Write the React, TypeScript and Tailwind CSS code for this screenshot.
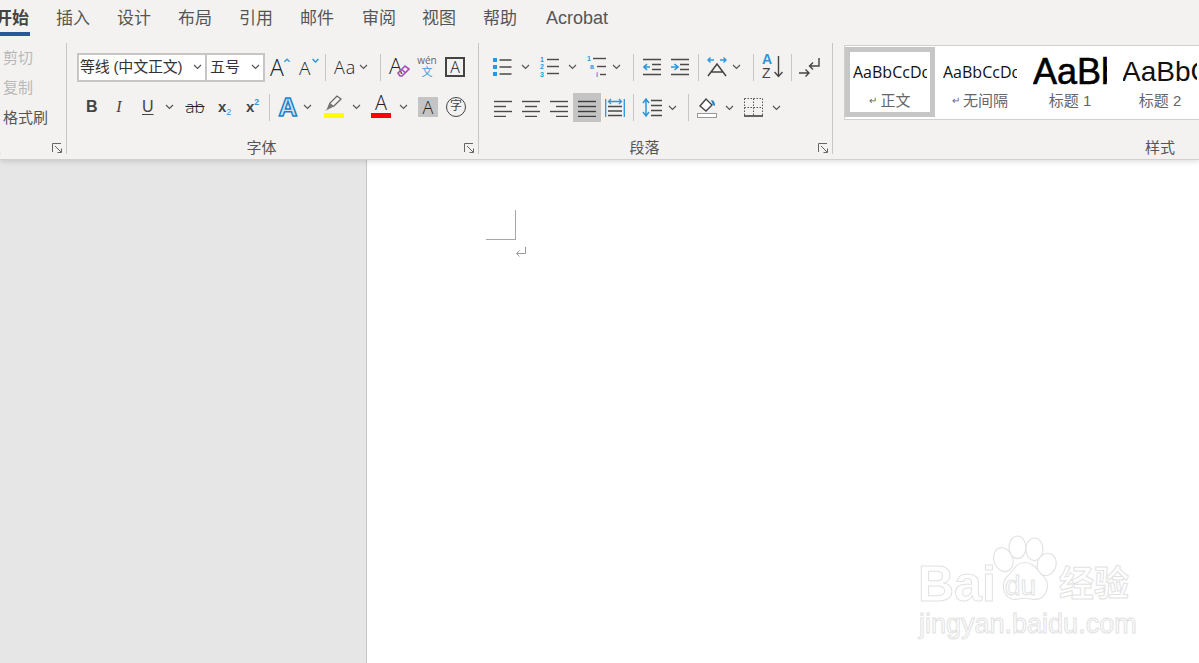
import React from "react";

const CJK = "font-['Liberation_Sans','Noto_Sans_CJK_SC',sans-serif]";
const BLUE = "#2f96d9";
const DARK = "#4a4a4a";
const THIN = "font-['Open_Sans',sans-serif] font-light text-[#222]";
const PREVIEW = "text-[16px] text-[#111] font-['Open_Sans',sans-serif] font-normal";

function Chev({ c = "" }: { c?: string }) {
  return (
    <svg className={`shrink-0 ${c}`} width="9" height="6" viewBox="0 0 9 6" fill="none" stroke="#555" strokeWidth="1.2">
      <path d="M1 1l3.5 3.5L8 1" />
    </svg>
  );
}

function Sep({ c = "" }: { c?: string }) {
  return <span className={`block w-px h-[27px] bg-[#c8c6c4] shrink-0 ${c}`} />;
}

function Launcher() {
  return (
    <svg className="absolute bottom-0 right-[3px]" width="11" height="11" viewBox="0 0 11 11" fill="none" stroke="#666" strokeWidth="1">
      <path d="M.5 9V.5H9" />
      <path d="M3 3l6 6M5.5 9.5h4v-4" />
    </svg>
  );
}

function Lines({ c = "", rows, w = 18, h = 18, color = DARK }: { c?: string; rows: [number, number, number][]; w?: number; h?: number; color?: string }) {
  return (
    <svg className={`shrink-0 ${c}`} width={w} height={h} viewBox={`0 0 ${w} ${h}`} fill="none" stroke={color} strokeWidth="1.4">
      {rows.map(([a, b, y], i) => (
        <path key={i} d={`M${a} ${y + 0.5}H${b}`} />
      ))}
    </svg>
  );
}

function Tab({ children, c = "w-[61px] text-[17px]" }: { children: React.ReactNode; c?: string }) {
  return <span className={`shrink-0 leading-[37px] text-[#555] ${c}`}>{children}</span>;
}

function StyleItem({ selected, preview, label, mark }: { selected?: boolean; preview: React.ReactNode; label: string; mark?: boolean }) {
  return (
    <div className={`w-[90px] h-[70px] shrink-0 flex flex-col items-center ${selected ? "border-[5px] border-[#c6c6c6]" : "border-[5px] border-transparent"}`}>
      <div className="w-[74px] h-[39px] overflow-hidden whitespace-nowrap flex items-center">{preview}</div>
      <div className="flex items-center text-[15px] leading-[20px] text-[#666]">
        {mark && <span className="text-[10px] mr-[3px]">↵</span>}
        {label}
      </div>
    </div>
  );
}

export default function App() {
  return (
    <div className={`w-[1199px] h-[663px] overflow-hidden flex flex-col bg-white relative ${CJK}`}>
      {/* Tabs */}
      <div className="h-[37px] bg-[#f3f2f1] flex shrink-0 relative z-20">
        <div className="w-[30px] shrink-0 mr-[26px] h-[36px] border-b-[4px] border-[#2b579a] overflow-hidden">
          <span className="block -ml-[5px] text-[17px] leading-[37px] font-bold text-[#444] whitespace-nowrap">开始</span>
        </div>
        <Tab>插入</Tab>
        <Tab>设计</Tab>
        <Tab>布局</Tab>
        <Tab>引用</Tab>
        <Tab c="w-[62px] text-[17px]">邮件</Tab>
        <Tab c="w-[60px] text-[17px]">审阅</Tab>
        <Tab>视图</Tab>
        <Tab c="w-[63px] text-[17px]">帮助</Tab>
        <Tab c="w-[70px] text-[18px]">Acrobat</Tab>
      </div>

      {/* Ribbon */}
      <div className="h-[123px] bg-[#f3f2f1] flex shrink-0 border-b border-[#d2d0ce] shadow-[0_2px_5px_rgba(0,0,0,0.12)] relative z-10 text-[#444]">
        {/* Clipboard */}
        <div className="w-[67px] mt-[6px] h-[111px] border-r border-[#c8c6c4] relative shrink-0 flex flex-col pl-[3px] text-[15px] overflow-hidden">
          <span className="leading-[30px] text-[#b8b8b8]">剪切</span>
          <span className="leading-[30px] text-[#b8b8b8]">复制</span>
          <span className="leading-[30px] text-[#555]">格式刷</span>
          <span className="absolute bottom-[-3px] left-[-44px] text-[15px] leading-[18px] text-[#555]">剪贴板</span>
          <Launcher />
        </div>

        {/* Font */}
        <div className="w-[412px] mt-[6px] h-[111px] border-r border-[#c8c6c4] relative shrink-0 flex flex-col pl-[10px] pt-[10px]">
          <div className="flex items-center h-[28px]">
            <div className="w-[130px] h-[29px] bg-white border-2 border-[#c8c6c4] flex items-center shrink-0 pl-[1px] text-[15px] text-[#333]">
              <span className="whitespace-nowrap tracking-[-0.2px]">等线 (中文正文)</span>
              <Chev c="ml-auto mr-[3px]" />
            </div>
            <div className="w-[58px] h-[29px] bg-white border-2 border-l-0 border-[#c8c6c4] flex items-center shrink-0 pl-[3px] text-[15px] text-[#333]">
              <span>五号</span>
              <Chev c="ml-auto mr-[3px]" />
            </div>
            <div className="ml-[5px] w-[20px] flex items-start shrink-0">
              <span className={`text-[23px] leading-[24px] w-[14px] ${THIN}`}>A</span>
              <svg className="mt-[3px]" width="7" height="5" viewBox="0 0 7 5" fill="none" stroke={BLUE} strokeWidth="1.5"><path d="M.5 4l3-3 3 3" /></svg>
            </div>
            <div className="ml-[9px] w-[20px] flex items-start shrink-0">
              <span className={`text-[19px] leading-[24px] w-[13px] mt-[1px] ${THIN}`}>A</span>
              <svg className="mt-[3px]" width="7" height="5" viewBox="0 0 7 5" fill="none" stroke={BLUE} strokeWidth="1.5"><path d="M.5 1l3 3 3-3" /></svg>
            </div>
            <Sep c="ml-[6px]" />
            <span className={`ml-[8px] w-[22px] text-[18px] tracking-[1px] shrink-0 whitespace-nowrap ${THIN}`}>Aa</span>
            <Chev c="ml-[3px]" />
            <Sep c="ml-[12px]" />
            <div className="ml-[8px] w-[21px] h-[22px] relative shrink-0">
              <span className={`absolute left-0 top-[-3px] text-[22px] leading-[24px] ${THIN}`}>A</span>
              <svg className="absolute left-[8px] top-[8px]" width="13" height="14" viewBox="0 0 13 14" fill="none" stroke="#a94cb8" strokeWidth="1.6">
                <path d="M1 9l7-7 4 3-7 7H3z" />
                <path d="M5 5.500l3.500 3.500" />
              </svg>
            </div>
            <div className="ml-[8px] w-[18px] h-[24px] flex flex-col items-center shrink-0 relative">
              <span className="text-[10px] leading-[11px] text-[#666] font-['Open_Sans',sans-serif]">wén</span>
              <span className="text-[11px] leading-[12px] text-[#3a9ad9]">文</span>
            </div>
            <div className={`ml-[9px] w-[20px] h-[20px] border-2 border-[#444] flex items-center justify-center text-[16px] leading-[16px] shrink-0 ${THIN}`}>A</div>
          </div>

          <div className="flex items-center h-[28px] mt-[12px]">
            <span className="ml-[9px] w-[10px] text-[16px] font-bold text-center shrink-0">B</span>
            <span className="ml-[18px] w-[10px] text-[16px] italic font-['Liberation_Serif',serif] text-center shrink-0">I</span>
            <span className="ml-[18px] w-[10px] text-[16px] underline underline-offset-2 text-center shrink-0">U</span>
            <Chev c="ml-[13px]" />
            <span className={`ml-[11px] w-[20px] text-[17px] line-through text-center shrink-0 ${THIN}`}>ab</span>
            <span className="ml-[13px] w-[15px] flex items-baseline shrink-0 font-bold text-[15px]">x<span className="text-[9px] font-normal text-[#3a96dd] translate-y-[3px]">2</span></span>
            <span className="ml-[13px] w-[15px] flex items-start shrink-0 font-bold text-[15px] leading-[20px]">x<span className="text-[9px] leading-[10px] text-[#3a96dd]">2</span></span>
            <Sep c="ml-[8px]" />
            <span className="ml-[8px] w-[20px] text-[26px] leading-[28px] font-bold text-center text-[#cfe6f7] [-webkit-text-stroke:1.5px_#1e7fc8] shrink-0">A</span>
            <Chev c="ml-[5px]" />
            <div className="ml-[12px] w-[20px] h-[25px] mb-[3px] flex flex-col items-center justify-end shrink-0">
              <svg width="20" height="17" viewBox="0 0 20 17" fill="none">
                <path d="M4 13l2-5 7-7 4 3-7 7z" stroke="#666" strokeWidth="1.3" />
                <path d="M1 16l3-3 2-5 4 3-5 3z" fill="#777" />
              </svg>
              <span className="w-[20px] h-[5px] bg-[#ffff00] mt-[1px]" />
            </div>
            <Chev c="ml-[8px]" />
            <div className="ml-[10px] w-[20px] h-[25px] mb-[3px] flex flex-col items-center justify-end shrink-0">
              <span className={`text-[20px] leading-[19px] ${THIN}`}>A</span>
              <span className="w-[20px] h-[5px] bg-[#ff0000] mt-[1px]" />
            </div>
            <Chev c="ml-[8px]" />
            <span className={`ml-[10px] w-[20px] h-[20px] bg-[#c4c4c4] text-[18px] leading-[20px] text-center shrink-0 ${THIN}`}>A</span>
            <span className="ml-[8px] w-[20px] h-[20px] rounded-full border-[1.5px] border-[#444] text-[12px] leading-[17px] text-center shrink-0">字</span>
          </div>

          <div className="absolute left-0 right-[22px] bottom-[-3px] h-[18px] text-center text-[15px] leading-[18px] text-[#555]">字体</div>
          <Launcher />
        </div>

        {/* Paragraph */}
        <div className="w-[354px] mt-[6px] h-[111px] border-r border-[#c8c6c4] relative shrink-0 flex flex-col pt-[10px]">
          <div className="flex items-center h-[28px]">
            <svg className="ml-[14px] shrink-0" width="19" height="20" viewBox="0 0 19 20">
              <path d="M0 2h4v4H0zM0 9h4v4H0zM0 16h4v4H0z" fill={BLUE} transform="translate(0,-1)" />
              <path d="M6.500 3h12M6.500 10h12M6.500 17h12" stroke={DARK} strokeWidth="1.4" />
            </svg>
            <Chev c="ml-[9px]" />
            <div className="ml-[10px] w-[19px] h-[22px] flex shrink-0">
              <div className="w-[6px] flex flex-col text-[7px] leading-[7.4px] font-bold text-[#2f96d9]"><span>1</span><span>2</span><span>3</span></div>
              <Lines w={13} h={22} rows={[[1, 13, 3], [1, 13, 10], [1, 13, 17]]} />
            </div>
            <Chev c="ml-[9px]" />
            <div className="ml-[10px] w-[19px] h-[22px] relative shrink-0">
              <span className="absolute left-0 top-[-1px] text-[7px] leading-[8px] font-bold text-[#2f96d9]">1</span>
              <span className="absolute left-[3px] top-[7px] text-[7px] leading-[8px] font-bold text-[#2f96d9]">a</span>
              <span className="absolute left-[9px] top-[15px] text-[7px] leading-[8px] font-bold text-[#2f96d9]">i</span>
              <Lines c="absolute left-0 top-0" w={19} h={22} rows={[[6, 19, 2], [10, 19, 10], [13, 19, 18]]} />
            </div>
            <Chev c="ml-[6px]" />
            <Sep c="ml-[12px]" />
            <svg className="ml-[9px] shrink-0" width="18" height="18" viewBox="0 0 18 18" fill="none" stroke={DARK} strokeWidth="1.4">
              <path d="M0 1.500h18M9 6.500h9M9 11.500h9M0 16.500h18" />
              <path d="M7 9H1M4 6L1 9l3 3" stroke={BLUE} strokeWidth="1.6" />
            </svg>
            <svg className="ml-[10px] shrink-0" width="18" height="18" viewBox="0 0 18 18" fill="none" stroke={DARK} strokeWidth="1.4">
              <path d="M0 1.500h18M9 6.500h9M9 11.500h9M0 16.500h18" />
              <path d="M0 9h6M3.500 6L7 9l-3.500 3" stroke={BLUE} strokeWidth="1.6" />
            </svg>
            <Sep c="ml-[9px]" />
            <svg className="ml-[8px] shrink-0" width="20" height="20" viewBox="0 0 20 20" fill="none">
              <path d="M1 19L10 7l9 12M4 15h12" stroke="#444" strokeWidth="1.5" />
              <path d="M1 3h6M3.500 .5L1 3l2.500 2.500M19 3h-6M16.500 .5L19 3l-2.500 2.500" stroke={BLUE} strokeWidth="1.4" />
            </svg>
            <Chev c="ml-[5px]" />
            <Sep c="ml-[12px]" />
            <div className="ml-[8px] w-[21px] h-[22px] relative shrink-0 font-bold">
              <span className="absolute left-0 top-[-4px] text-[14px] leading-[15px] text-[#2f96d9]">A</span>
              <span className="absolute left-0 top-[10px] text-[14px] leading-[14px] font-normal text-[#444]">Z</span>
              <svg className="absolute left-[12px] top-0" width="9" height="22" viewBox="0 0 9 22" fill="none" stroke="#444" strokeWidth="1.4"><path d="M4.500 0v20M.5 16l4 4.500 4-4.500" /></svg>
            </div>
            <Sep c="ml-[8px]" />
            <svg className="ml-[7px] shrink-0" width="21" height="20" viewBox="0 0 21 20" fill="none" stroke="#444" strokeWidth="1.4">
              <path d="M20 1v8h-9M14 5.500L10.500 9l3.500 3.500" />
              <path d="M0 16h10M6.500 12.500L10 16l-3.500 3.500" />
            </svg>
          </div>

          <div className="flex items-center h-[29px] mt-[12px]">
            <Lines c="ml-[15px]" rows={[[0, 18, 2], [0, 12, 7], [0, 18, 12], [0, 12, 17]]} />
            <Lines c="ml-[10px]" rows={[[0, 18, 2], [3, 15, 7], [0, 18, 12], [3, 15, 17]]} />
            <Lines c="ml-[10px]" rows={[[0, 18, 2], [6, 18, 7], [0, 18, 12], [6, 18, 17]]} />
            <div className="ml-[5px] w-[28px] h-[29px] bg-[#c4c4c4] flex items-center justify-center shrink-0">
              <Lines rows={[[0, 18, 2], [0, 18, 7], [0, 18, 12], [0, 18, 17]]} color="#3d3d3d" />
            </div>
            <svg className="ml-[4px] shrink-0" width="20" height="20" viewBox="0 0 20 20" fill="none">
              <path d="M.7 1v18M19.300 1v18" stroke={BLUE} strokeWidth="1.3" />
              <path d="M4 3.500h12M6 1L3.500 3.500 6 6M14 1l2.500 2.500L14 6" stroke={BLUE} strokeWidth="1.3" />
              <path d="M3 8.500h14M3 13h14M3 17.500h14" stroke={DARK} strokeWidth="1.4" />
            </svg>
            <Sep c="ml-[8px]" />
            <svg className="ml-[8px] shrink-0" width="20" height="19" viewBox="0 0 20 19" fill="none">
              <path d="M4 1v17M1 5l3-4 3 4M1 14l3 4 3-4" stroke={BLUE} strokeWidth="1.5" />
              <path d="M9 2.500h11M9 7.500h11M9 12.500h11M9 17.500h11" stroke={DARK} strokeWidth="1.4" />
            </svg>
            <Chev c="ml-[6px]" />
            <Sep c="ml-[11px]" />
            <svg className="ml-[8px] shrink-0" width="20" height="21" viewBox="0 0 20 21" fill="none">
              <path d="M3 9l6-7 6 6-6 6z" stroke="#444" strokeWidth="1.4" fill="#fff" />
              <path d="M14 3c3 0 4 3 4 6l-2-1z" fill="#1e7fc8" />
              <rect x=".5" y="16.500" width="19" height="4" stroke="#999" fill="#fff" />
            </svg>
            <Chev c="ml-[8px]" />
            <svg className="ml-[10px] shrink-0" width="19" height="19" viewBox="0 0 19 19" fill="none" stroke="#555" strokeWidth="1">
              <path d="M.5 .5h18M.5 9.500h18M.5 .5v18M9.500 .5v18M18.500 .5v18" strokeDasharray="1.500 1.500" />
              <path d="M0 18h19" strokeWidth="1.500" stroke="#333" />
            </svg>
            <Chev c="ml-[9px]" />
          </div>

          <div className="absolute left-0 right-[22px] bottom-[-3px] h-[18px] text-center text-[15px] leading-[18px] text-[#555]">段落</div>
          <Launcher />
        </div>

        {/* Styles */}
        <div className="flex-1 relative mt-[8px] pl-[11px] overflow-hidden">
          <div className="h-[75px] bg-white border border-r-0 border-[#d2d0ce] flex items-start pt-[1px]">
            <StyleItem selected mark label="正文" preview={<span className={PREVIEW}>AaBbCcDd</span>} />
            <StyleItem mark label="无间隔" preview={<span className={PREVIEW}>AaBbCcDd</span>} />
            <StyleItem label="标题 1" preview={<span className="text-[36px] text-black font-['Liberation_Sans',sans-serif] [-webkit-text-stroke:0.6px_#000]">AaBbC</span>} />
            <StyleItem label="标题 2" preview={<span className="text-[28px] text-[#111] font-['Liberation_Sans',sans-serif] ml-[-1px]">AaBbC</span>} />
          </div>
          <div className="absolute left-[312px] bottom-[2px] text-[15px] leading-[18px] text-[#555]">样式</div>
        </div>
      </div>

      {/* Document body */}
      <div className="flex-1 flex min-h-0">
        <div className="w-[367px] shrink-0 bg-[#e6e6e6] border-r border-[#c8c6c4]" />
        <div className="flex-1 bg-white pl-[119px] pt-[50px] flex flex-col items-start">
          <div className="w-[30px] h-[30px] border-r border-b border-[#a6a6a6]" />
          <svg className="ml-[29px] mt-[7px]" width="11" height="10" viewBox="0 0 11 10" fill="none" stroke="#999" strokeWidth="1">
            <path d="M10.500 0v6.500H1.500M4.500 3.500L1.500 6.500l3 3" />
          </svg>
        </div>
      </div>

      {/* Watermark */}
      <div className="absolute left-[918px] top-[533px] w-[220px] h-[106px] text-white pointer-events-none">
        <span className="absolute left-[0px] top-[26px] text-[50px] leading-[50px] font-bold [-webkit-text-stroke:1px_#e2e2e2] font-['Liberation_Sans',sans-serif]">Bai</span>
        <svg className="absolute left-[74px] top-[2px]" width="66" height="70" viewBox="0 0 70 72" fill="#fff" stroke="#e2e2e2" strokeWidth="1.2">
          <ellipse cx="12" cy="25" rx="10" ry="13" transform="rotate(-20 12 25)" />
          <ellipse cx="27" cy="12" rx="9" ry="12" />
          <ellipse cx="45" cy="14" rx="9" ry="12" />
          <ellipse cx="58" cy="30" rx="10" ry="12" transform="rotate(20 58 30)" />
          <path d="M35 28c10 0 13 9 20 15 8 8 3 26-12 24-6-1-10-2-16 0-14 2-19-14-11-24 7-6 9-15 19-15z" />
        </svg>
        <span className="absolute left-[87px] top-[38px] text-[28px] leading-[30px] [-webkit-text-stroke:1px_#e2e2e2] font-['Liberation_Sans',sans-serif]">du</span>
        <span className="absolute left-[141px] top-[32px] text-[35px] leading-[38px] font-bold [-webkit-text-stroke:1px_#e2e2e2] whitespace-nowrap">经验</span>
        <span className="absolute left-[1px] top-[76px] text-[27px] leading-[30px] [-webkit-text-stroke:1px_#e2e2e2] whitespace-nowrap font-['Liberation_Sans',sans-serif]">jingyan.baidu.com</span>
      </div>
    </div>
  );
}
